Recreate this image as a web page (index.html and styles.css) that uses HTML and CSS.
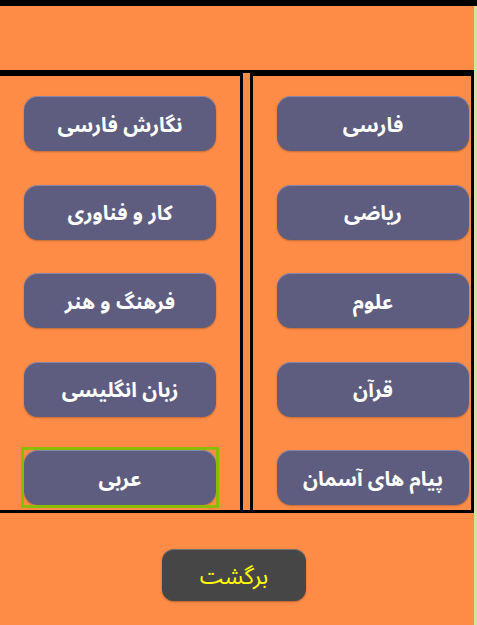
FILE: index.html
```html
<!DOCTYPE html>
<html lang="fa">
<head>
<meta charset="utf-8">
<title>دروس</title>
<link rel="stylesheet" href="styles.css">
</head>
<body>
<div class="topbar"></div>
<div class="page" dir="rtl">
  <div class="grid">
    <div class="col col-right">
      <button class="lesson">فارسی</button>
      <button class="lesson">ریاضی</button>
      <button class="lesson">علوم</button>
      <button class="lesson">قرآن</button>
      <button class="lesson">پیام های آسمان</button>
    </div>
    <div class="col col-left">
      <button class="lesson">نگارش فارسی</button>
      <button class="lesson">کار و فناوری</button>
      <button class="lesson">فرهنگ و هنر</button>
      <button class="lesson">زبان انگلیسی</button>
      <button class="lesson focused">عربی</button>
    </div>
  </div>
  <div class="footer">
    <button class="back">برگشت</button>
  </div>
</div>
</body>
</html>
```
FILE: styles.css
```css
html, body {
  margin: 0;
  padding: 0;
}
body {
  background: #d3e2a4;
  font-family: "Noto Sans Arabic", "Noto Naskh Arabic", "DejaVu Sans", sans-serif;
  width: 477px;
  height: 625px;
  overflow: hidden;
}
.topbar {
  height: 6px;
  background: #000;
}
.page {
  width: 474px;
  height: 619px;
  background: #ff8c46;
  padding-top: 64px;
  box-sizing: border-box;
}
.grid {
  display: flex;
  border-top: 3px solid #000;
  border-bottom: 3px solid #000;
}
.col {
  display: flex;
  flex-direction: column;
  align-items: flex-end;
  gap: 33.5px;
  padding: 20px 0 5px 24px;
  border-top: 3px solid #000;
  box-sizing: border-box;
}
.col-right {
  width: 224px;
  border-left: 3px solid #000;
  border-right: 3px solid #000;
}
.col-left {
  width: 243px;
  margin-right: 7px;
  border-right: 3px solid #000;
}
.lesson {
  position: relative;
  width: 192px;
  height: 55px;
  border: none;
  border-radius: 14px;
  background: #5e5d80;
  color: #fff;
  font-family: "Noto Sans Arabic", "Noto Naskh Arabic", "DejaVu Sans", sans-serif;
  font-weight: bold;
  font-size: 20.5px;
  box-shadow: inset 0 1px 0 rgba(170, 170, 210, 0.55), 0 1px 2px rgba(0, 0, 0, 0.25);
  padding: 3px 0 0;
}
.focused::after {
  content: "";
  position: absolute;
  left: -3px;
  top: -3px;
  right: -3px;
  bottom: -3px;
  border: 3px solid #8abc00;
}
.footer {
  display: flex;
  justify-content: center;
  padding-right: 6px;
  margin-top: 36px;
}
.back {
  width: 144px;
  height: 52px;
  border: none;
  border-radius: 12px;
  background: #464646;
  color: #ffff00;
  font-family: "Noto Sans Arabic", "Noto Naskh Arabic", "DejaVu Sans", sans-serif;
  font-size: 23px;
  box-shadow: inset 0 1px 0 rgba(140, 140, 140, 0.6), 0 1px 2px rgba(0, 0, 0, 0.3);
  padding: 3px 0 0;
}
```
